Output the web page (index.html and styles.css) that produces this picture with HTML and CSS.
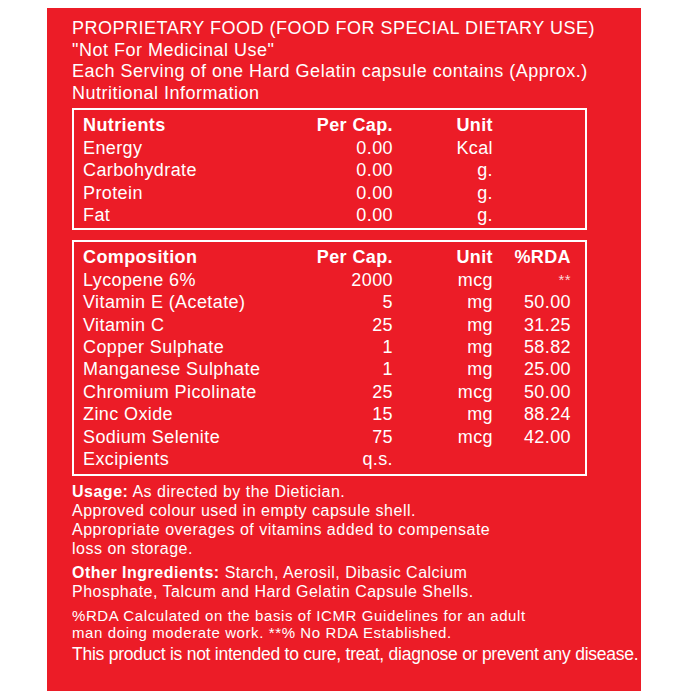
FILE: index.html
```html
<!DOCTYPE html>
<html lang="en">
<head>
<meta charset="utf-8">
<title>Nutritional Information</title>
<link rel="stylesheet" href="styles.css">
</head>
<body>
<div class="panel">
  <div class="intro">
    <p>PROPRIETARY FOOD (FOOD FOR SPECIAL DIETARY USE)</p>
    <p>"Not For Medicinal Use"</p>
    <p>Each Serving of one Hard Gelatin capsule contains (Approx.)</p>
    <p>Nutritional Information</p>
  </div>

  <div class="box box-nutrients">
    <div class="row head"><span class="name">Nutrients</span><span class="num">Per Cap.</span><span class="unit">Unit</span></div>
    <div class="row"><span class="name">Energy</span><span class="num">0.00</span><span class="unit">Kcal</span></div>
    <div class="row"><span class="name">Carbohydrate</span><span class="num">0.00</span><span class="unit">g.</span></div>
    <div class="row"><span class="name">Protein</span><span class="num">0.00</span><span class="unit">g.</span></div>
    <div class="row"><span class="name">Fat</span><span class="num">0.00</span><span class="unit">g.</span></div>
  </div>

  <div class="box box-composition">
    <div class="row head"><span class="name">Composition</span><span class="num">Per Cap.</span><span class="unit">Unit</span><span class="rda">%RDA</span></div>
    <div class="row"><span class="name">Lycopene 6%</span><span class="num">2000</span><span class="unit">mcg</span><span class="rda stars">**</span></div>
    <div class="row"><span class="name">Vitamin E (Acetate)</span><span class="num">5</span><span class="unit">mg</span><span class="rda">50.00</span></div>
    <div class="row"><span class="name">Vitamin C</span><span class="num">25</span><span class="unit">mg</span><span class="rda">31.25</span></div>
    <div class="row"><span class="name">Copper Sulphate</span><span class="num">1</span><span class="unit">mg</span><span class="rda">58.82</span></div>
    <div class="row"><span class="name">Manganese Sulphate</span><span class="num">1</span><span class="unit">mg</span><span class="rda">25.00</span></div>
    <div class="row"><span class="name">Chromium Picolinate</span><span class="num">25</span><span class="unit">mcg</span><span class="rda">50.00</span></div>
    <div class="row"><span class="name">Zinc Oxide</span><span class="num">15</span><span class="unit">mg</span><span class="rda">88.24</span></div>
    <div class="row"><span class="name">Sodium Selenite</span><span class="num">75</span><span class="unit">mcg</span><span class="rda">42.00</span></div>
    <div class="row"><span class="name">Excipients</span><span class="num">q.s.</span><span class="unit"></span><span class="rda"></span></div>
  </div>

  <div class="notes">
    <p class="note"><b>Usage:</b> As directed by the Dietician.<br>Approved colour used in empty capsule shell.<br>Appropriate overages of vitamins added to compensate<br>loss on storage.</p>
    <p class="note note-gap"><b>Other Ingredients:</b> Starch, Aerosil, Dibasic Calcium<br>Phosphate, Talcum and Hard Gelatin Capsule Shells.</p>
    <p class="small">%RDA Calculated on the basis of ICMR Guidelines for an adult<br>man doing moderate work. **% No RDA Established.</p>
    <p class="disclaimer">This product is not intended to cure, treat, diagnose or prevent any disease.</p>
  </div>
</div>
</body>
</html>
```

FILE: styles.css
```css
html, body {
  margin: 0;
  padding: 0;
  background: #ffffff;
}

body {
  font-family: "Liberation Sans", Arial, sans-serif;
  color: #ffffff;
}

p {
  margin: 0;
}

.panel {
  box-sizing: border-box;
  width: 594px;
  height: 683px;
  margin: 8px 0 0 47px;
  padding: 10px 0 0 25px;
  background: #ec1c27;
}

.intro {
  font-size: 18px;
  line-height: 21.6px;
  letter-spacing: 0.5px;
}

.box {
  box-sizing: border-box;
  width: 515px;
  border: 2px solid #ffffff;
  font-size: 18px;
  line-height: 22.4px;
  letter-spacing: 0.4px;
  padding: 0 14px 0 9px;
}

.box-nutrients {
  margin-top: 4px;
  padding-top: 4px;
  padding-bottom: 2px;
}

.box-composition {
  margin-top: 10px;
  padding-top: 4px;
  padding-bottom: 4px;
}

.row {
  display: grid;
  grid-template-columns: 230px 80px 100px 78px;
}

.row.head {
  font-weight: bold;
}

.num,
.unit,
.rda {
  text-align: right;
}

.stars {
  font-size: 15px;
  color: #fbd6d8;
}

.notes {
  margin-top: 6px;
}

.note {
  font-size: 16px;
  line-height: 19px;
  letter-spacing: 0.5px;
}

.note-gap {
  margin-top: 5px;
}

.small {
  margin-top: 6px;
  font-size: 15px;
  line-height: 17px;
  letter-spacing: 0.6px;
}

.disclaimer {
  margin-top: 3px;
  font-size: 17.5px;
  line-height: 21px;
  letter-spacing: -0.25px;
  white-space: nowrap;
}
```
